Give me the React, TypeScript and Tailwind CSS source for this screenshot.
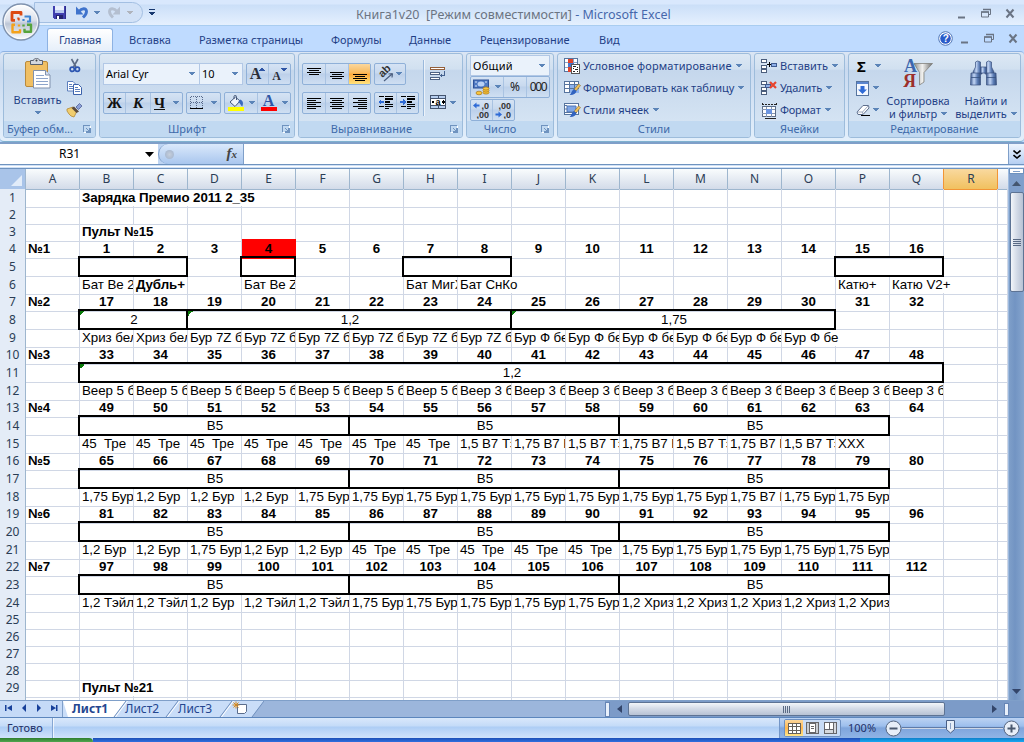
import React from "react";

type Kids = { children?: React.ReactNode };

/* ---------- small shared pieces ---------- */

function Caret({ c = "text-[#5b84b8]" }: { c?: string }) {
  return (
    <svg width="6" height="4" viewBox="0 0 6 4" className={`shrink-0 ${c}`} shapeRendering="crispEdges">
      <path d="M0 0h6v1H0zM1 1h4v1H1zM2 2h2v1H2z" fill="currentColor" />
    </svg>
  );
}

function Launcher() {
  return (
    <svg width="8" height="8" viewBox="0 0 8 8" shapeRendering="crispEdges" className="shrink-0">
      <path d="M0 0h7v1H1v6H0z" fill="#6f93bf" />
      <path d="M3 3h1v1h1v1h1V3h2v5H3V6h2V5H4V4H3z" fill="#6f93bf" />
      <path d="M1 7h2v1H1zM7 1h1v2H7z" fill="#fff" />
    </svg>
  );
}

function Group({ w, label, launcher, labelClass = "", children }: Kids & { w: string; label: string; launcher?: boolean; labelClass?: string }) {
  return (
    <section className={`flex h-[85px] shrink-0 flex-col overflow-hidden rounded-[3px] border border-[#9dbcdb] bg-[linear-gradient(#dce8f4,#d1e0f0_18%,#c5d7ec_20%,#d9e7f5)] ${w}`}>
      <div className="flex h-[67px] shrink-0">{children}</div>
      <div className={`flex h-4 shrink-0 items-center bg-[#c1d9f1] text-[#3e6aaa] ${launcher ? "pr-1" : ""}`}>
        <span className={`flex-1 whitespace-nowrap text-center leading-4 ${labelClass}`}>{label}</span>
        {launcher && <Launcher />}
      </div>
    </section>
  );
}

function Box({ w, children, className = "" }: Kids & { w: string; className?: string }) {
  return (
    <div className={`flex h-[22px] shrink-0 overflow-hidden rounded-[2px] border border-[#8fb0d8] bg-[linear-gradient(#d5e3f4,#c8d9ee_45%,#bcd0ea_50%,#cfdff2)] ${w} ${className}`}>
      {children}
    </div>
  );
}

function Cell({ w, children, last, className = "" }: Kids & { w: string; last?: boolean; className?: string }) {
  return (
    <button className={`flex h-full shrink-0 items-center justify-center ${last ? "" : "border-r border-[#a9c3e2]"} ${w} ${className}`}>
      {children}
    </button>
  );
}

/* ---------- icons ---------- */

function Lines({ rows, y = 1 }: { rows: [number, number][]; y?: number }) {
  return (
    <svg width="14" height="13" viewBox="0 0 14 13" shapeRendering="crispEdges">
      {rows.map(([x, w], i) => (
        <rect key={i} x={x} y={y + i * 2} width={w} height="1" fill="#000" />
      ))}
    </svg>
  );
}

function OfficeButton() {
  return (
    <svg width="38" height="38" viewBox="0 0 38 38">
      <defs>
        <linearGradient id="orb" x1="0" y1="0" x2="0" y2="1">
          <stop offset="0" stopColor="#fff" />
          <stop offset=".45" stopColor="#dde2ec" />
          <stop offset=".55" stopColor="#bcc6d6" />
          <stop offset="1" stopColor="#fff" />
        </linearGradient>
      </defs>
      <circle cx="19" cy="19" r="18" fill="url(#orb)" stroke="#7f92ae" strokeWidth="1.4" />
      <circle cx="19" cy="19" r="16.6" fill="none" stroke="#fff" strokeWidth="1" opacity=".8" />
      <g fill="none" strokeWidth="2.800" strokeLinejoin="round">
        <path d="M13 17.300h-3V9.500h9v3" stroke="#dc4a12" />
        <path d="M16.800 17.500v-2h-1.500" stroke="#dc4a12" strokeWidth="1.800" />
        <path d="M22.500 13.500h5.500v5h-3M21.500 16v2" stroke="#3f86d2" strokeWidth="2.200" />
        <path d="M13 21.800h-2.500v7.400h7.500v-3M17 21.500v2" stroke="#f4a21b" strokeWidth="2.400" />
        <path d="M25 21.800h4v7h-6.500v-3M21.500 21.500v2" stroke="#56a43c" strokeWidth="2.400" />
      </g>
    </svg>
  );
}

function Save() {
  return (
    <svg width="15" height="15" viewBox="0 0 15 15" shapeRendering="crispEdges">
      <path d="M1 1h13v13H2l-1-1z" fill="#3f3fae" />
      <path d="M3 1h9v7H3z" fill="#e8eefc" />
      <path d="M3 5h9v3H3z" fill="#b9c9f0" />
      <path d="M4 10h7v4H4z" fill="#23236e" />
      <path d="M5 11h2v3H5z" fill="#fff" />
      <path d="M13 1h1v13h-1z" fill="#2d2d8c" />
    </svg>
  );
}

function Undo({ c = "#3f73cc", flip }: { c?: string; flip?: boolean }) {
  return (
    <svg width="14" height="13" viewBox="0 0 14 13" className={flip ? "-scale-x-100" : ""}>
      <path d="M4 5.500C6.500 2 11.500 1.500 11.500 5.500c0 2.500-1.200 3.800-3.500 6" fill="none" stroke={c} strokeWidth="2.900" />
      <path d="M1 .5v8h7.500z" fill={c} />
    </svg>
  );
}

function Paste() {
  return (
    <svg width="28" height="32" viewBox="0 0 28 32">
      <rect x="1.500" y="3.500" width="22" height="25" rx="1.500" fill="#f0bf63" stroke="#b98a3c" />
      <path d="M6.500 2.500h3c.5-3 5.500-3 6 0h3v4h-12z" fill="#d4d8df" stroke="#59616f" />
      <circle cx="12.500" cy="2.500" r="1" fill="#444" />
      <path d="M9.500 12.500h12l4.500 4.500v13h-16.500z" fill="#fff" stroke="#8091ad" />
      <path d="M21.500 12.500v4.500h4.500" fill="#d7e1f1" stroke="#8091ad" />
      <path d="M12 17.500h8M12 20.500h12M12 23.500h12M12 26.500h12" stroke="#8ea5cb" />
    </svg>
  );
}

function Cut() {
  return (
    <svg width="12" height="15" viewBox="0 0 12 15">
      <path d="M2.500 1l4.500 8M9 1l-4.500 8" stroke="#5d6c86" strokeWidth="1.600" />
      <circle cx="3.200" cy="11.300" r="2.100" fill="none" stroke="#2c55b0" strokeWidth="1.700" />
      <circle cx="8.400" cy="11.300" r="2.100" fill="none" stroke="#2c55b0" strokeWidth="1.700" />
    </svg>
  );
}

function Copy() {
  return (
    <svg width="15" height="14" viewBox="0 0 15 14">
      <path d="M.5 .5h5.500l2.500 2.500v7h-8z" fill="#fff" stroke="#5c7fbe" />
      <path d="M2 3.500h3M2 5.500h5M2 7.500h5" stroke="#5c7fbe" />
      <path d="M6.500 3.500h5l3 3v7h-8z" fill="#fff" stroke="#3c62ab" />
      <path d="M8 6.500h3M8 8.500h5M8 10.500h5" stroke="#5c7fbe" />
    </svg>
  );
}

function Brush() {
  return (
    <svg width="17" height="15" viewBox="0 0 17 15">
      <path d="M1 6l6-2 4 4-3 6-3-1-2-2-2-3z" fill="#f0cd6e" stroke="#b48a35" strokeWidth=".8" />
      <path d="M8 3.500l5 5-2.500 1.500-5-5z" fill="#5b4a3c" />
      <path d="M10 4l3.500-3.500 2.500 2.500-3.500 3.500z" fill="#8ba0d8" stroke="#46558c" strokeWidth=".7" />
    </svg>
  );
}

function Borders() {
  return (
    <svg width="14" height="14" viewBox="0 0 14 14" shapeRendering="crispEdges">
      <path d="M.5 .5h12v12M.5 .5v12M6.500 .5v12M.5 6.500h12" fill="none" stroke="#57698a" strokeDasharray="1 1" />
      <path d="M0 12h13v1H0z" fill="#000" />
    </svg>
  );
}

function Bucket() {
  return (
    <svg width="16" height="16" viewBox="0 0 16 16">
      <path d="M7.500 2L2 7l5 4.500L12 6z" fill="#eef4fd" stroke="#46597a" />
      <path d="M6 4V1.500c0-1.500 2.500-1.500 2.500 0V5" fill="none" stroke="#46597a" />
      <path d="M12 4.500c3.500 1 3.500 4.500 2.200 7-1.700-1-1.700-3.500-4-4.500z" fill="#3a69bc" />
      <rect y="12" width="16" height="4" fill="#ff0" />
    </svg>
  );
}

function Orient() {
  return (
    <svg width="16" height="16" viewBox="0 0 16 16">
      <text x="0" y="0" transform="translate(4.500 12) rotate(-45)" fontFamily="Liberation Sans" fontWeight="700" fontSize="11" fill="#333">ab</text>
      <path d="M6 15l8-7M14.500 7.500l-4 .5M14.500 7.500l-.5 4" stroke="#4c5f80" fill="none" strokeWidth="1.200" />
    </svg>
  );
}

function Indent({ right }: { right?: boolean }) {
  return (
    <svg width="16" height="14" viewBox="0 0 16 14" shapeRendering="crispEdges">
      <path d="M1 0h5v1H1zM7 0h8v1H7zM7 2h8v2H7zM7 5h5v2H7zM7 8h8v1H7zM1 10h5v1H1zM7 10h8v1H7zM7 12h4v1H7z" fill="#000" />
      <path d={right ? "M0 5h3V3l3 3-3 3V7H0z" : "M6 5H3V3L0 6l3 3V7h3z"} fill="#2f6bd6" />
    </svg>
  );
}

function Wrap() {
  return (
    <svg width="17" height="15" viewBox="0 0 17 15" shapeRendering="crispEdges">
      <path d="M0 1h15v3H0z" fill="#94603c" />
      <path d="M1 2h13v1H1z" fill="#fff" />
      <path d="M0 6h10v3H0zM0 11h10v3H0z" fill="#4e6485" />
      <path d="M1 7h8v1H1zM1 12h8v1H1z" fill="#fff" />
      <path d="M14 5h1v5h-3v2l-2-2.500 2-2.500v2h2z" fill="#44618f" />
    </svg>
  );
}

function Merge() {
  return (
    <svg width="17" height="15" viewBox="0 0 17 15" shapeRendering="crispEdges">
      <rect x=".5" y=".5" width="15" height="13" fill="#b7cff0" stroke="#44546e" />
      <path d="M1 4h14v6H1z" fill="#fff" />
      <path d="M0 3.500h16M0 10.500h16M8 1v3M8 10v4" stroke="#44546e" />
      <path d="M1 7l2-2v1h1v2H3v1zM15 7l-2-2v1h-1v2h1v1z" fill="#000" />
      <text x="5.500" y="9.500" fontFamily="Liberation Sans" fontWeight="700" fontSize="9">a</text>
    </svg>
  );
}

function Money() {
  return (
    <svg width="18" height="17" viewBox="0 0 18 17">
      <rect x=".5" y="1" width="15" height="8" fill="#4d78c2" stroke="#2f5299" />
      <ellipse cx="8" cy="5" rx="3.500" ry="2.500" fill="#b8d0f5" />
      <path d="M2 3h2M12 3h2M2 7h2" stroke="#d8e5fb" />
      <g fill="#f8c53c" stroke="#a9751a" strokeWidth=".7">
        <ellipse cx="13" cy="13.500" rx="3" ry="1.600" />
        <ellipse cx="13" cy="11.500" rx="3" ry="1.600" />
        <ellipse cx="13" cy="9.500" rx="3" ry="1.600" />
        <ellipse cx="6" cy="14" rx="3" ry="1.800" />
      </g>
    </svg>
  );
}

function Decimals({ top, bottom, left }: { top: string; bottom: string; left?: boolean }) {
  return (
    <svg width="17" height="18" viewBox="0 0 17 18">
      <g fontFamily="Liberation Sans" fontSize="9" fontWeight="700" fill="#333">
        <text x="16" y="8" textAnchor="end">{top}</text>
        <text x="16" y="17" textAnchor="end">{bottom}</text>
      </g>
      <path d={left ? "M0 4.500l3.500-3v2h3v2h-3v2z" : "M7 13.500l-3.500-3v2H.5v2h3v2z"} fill="#2f6bd6" />
    </svg>
  );
}

function CondFormat() {
  return (
    <svg width="17" height="16" viewBox="0 0 17 16" shapeRendering="crispEdges">
      <rect x=".5" y=".5" width="13" height="13" fill="#fff" stroke="#56749f" />
      <path d="M1 4.500h12M1 9.500h12M4.500 1v12M9.500 1v12" stroke="#8aa3c7" />
      <path d="M4 1h5v4H4zM4 9h4v5H4z" fill="#e0432b" />
      <path d="M4 5h6v4H4z" fill="#4775cf" />
      <rect x="7.500" y="6.500" width="8" height="9" fill="#fff" stroke="#555" />
      <path d="M9 8h3M9 10h1M11 11h3M9 13h2M13 9v1M13 13v1" stroke="#222" />
    </svg>
  );
}

function TableFormat({ one }: { one?: boolean }) {
  return (
    <svg width="17" height="16" viewBox="0 0 17 16">
      <rect x=".5" y="1.500" width="14" height="11" fill="#fff" stroke="#56749f" />
      {one ? <path d="M3 4h9v6H3z" fill="#7fa6e6" stroke="#4f74b4" /> : <path d="M5 4h10v9H5z" fill="#8fb4ee" />}
      {one ? <path d="M1 3.500h2M1 7h2M1 10.500h12" stroke="#56749f" /> : <path d="M1 4.500h14M1 8.500h14M5.500 1v12M10.500 1v12" stroke="#56749f" />}
      <path d="M14.500 4l2 1.500-4.500 5.500-2-1.500z" fill="#f1c25a" stroke="#8a6a2a" strokeWidth=".6" />
      <path d="M10 9l2.500 2c-.5 3-4 4.500-7 4 2-1 2-4.500 4.500-6z" fill="#3163bf" />
    </svg>
  );
}

function CellsIcon({ kind }: { kind: "ins" | "del" | "fmt" }) {
  if (kind === "fmt")
    return (
      <svg width="17" height="17" viewBox="0 0 17 17" shapeRendering="crispEdges">
        <path d="M1 1v3M15 1v3M1 2.500h14" stroke="#222" strokeDasharray="2 1" fill="none" />
        <rect x="1.500" y="4.500" width="13" height="10" fill="#fff" stroke="#5b6d88" />
        <path d="M1 7.500h13M1 11.500h13M5.500 5v10M10.500 5v10" stroke="#8797af" />
        <path d="M5 7h6v5H5z" fill="#6d96e0" />
        <path d="M4 16h11" stroke="#222" />
      </svg>
    );
  return (
    <svg width="17" height="16" viewBox="0 0 17 16" shapeRendering="crispEdges">
      <g fill="#fff" stroke="#4b5e7c">
        <rect x=".5" y="1.500" width="5" height="3" />
        <rect x=".5" y="7.500" width="5" height="3" />
        <rect x=".5" y="11.500" width="5" height="3" />
      </g>
      {kind === "ins" ? (
        <>
          <path d="M6 6h4v1H6zM8 4h1v5H8z" fill="#000" />
          <rect x="10.500" y="5.500" width="5" height="3" fill="#8fb0e8" stroke="#3f5b8f" />
        </>
      ) : (
        <>
          <rect x="4.500" y="4.500" width="5" height="3" fill="#8fb0e8" stroke="#3f5b8f" />
          <path d="M9 2l6 6M15 2L9 8" stroke="#e8442c" strokeWidth="2.200" shapeRendering="auto" />
        </>
      )}
    </svg>
  );
}

function FillDown() {
  return (
    <svg width="13" height="15" viewBox="0 0 13 15">
      <rect x=".5" y=".5" width="12" height="14" fill="#f4f8ff" stroke="#56749f" />
      <path d="M1 1h11v2H1z" fill="#5b86cf" />
      <path d="M4.500 5h4v3.500h2.500L6.500 13 2 8.500h2.500z" fill="#2f6bd6" />
    </svg>
  );
}

function Eraser() {
  return (
    <svg width="15" height="13" viewBox="0 0 15 13">
      <path d="M1 8l6-6.500h5.500L13 4l-6 6.500H2z" fill="#fff" stroke="#5e6f8d" />
      <path d="M1 8h5.500l6-6.500M6.500 8l.5 2.500" fill="none" stroke="#8595b0" strokeWidth=".8" />
      <path d="M5 11.500h9" stroke="#000" />
    </svg>
  );
}

function SortFilter() {
  return (
    <svg width="31" height="30" viewBox="0 0 31 30">
      <defs>
        <linearGradient id="fun" x1="0" x2="1">
          <stop offset="0" stopColor="#8d8d8d" />
          <stop offset=".45" stopColor="#f2f2f0" />
          <stop offset="1" stopColor="#6f6f6f" />
        </linearGradient>
      </defs>
      <path d="M11 5.500h18.500l-8.500 9v9.500l-4.500 3V14.500z" fill="url(#fun)" stroke="#77756f" strokeWidth=".7" />
      <g fontFamily="Liberation Serif" fontWeight="700" fontSize="18">
        <text x="1" y="13.500" fill="#3c66ae">А</text>
        <text x="0" y="28.500" fill="#9c2f2b">Я</text>
      </g>
    </svg>
  );
}

function Binoculars() {
  return (
    <svg width="29" height="27" viewBox="0 0 29 27">
      <defs>
        <linearGradient id="bin" x1="0" x2="1">
          <stop offset="0" stopColor="#3f5c92" />
          <stop offset=".35" stopColor="#c3d6f5" />
          <stop offset=".7" stopColor="#5b7cb4" />
          <stop offset="1" stopColor="#35507f" />
        </linearGradient>
      </defs>
      <g fill="url(#bin)" stroke="#3b5280" strokeWidth=".7">
        <path d="M6.500 2l2-1 3 1v5l1.500 5v2H4v-2l2.500-5z" />
        <path d="M17.500 2l2-1 3 1v5L25 12v2h-9v-2l1.500-5z" />
        <rect x="11.500" y="7" width="6" height="6" />
        <path d="M2 13h9.500v12H1.500z" />
        <path d="M17.500 13H27l.5 12h-10z" />
      </g>
      <path d="M2 17.500h9.500M17.500 17.500H27" stroke="#35507f" strokeWidth=".8" />
    </svg>
  );
}

function WinButtons() {
  return (
    <svg width="60" height="12" viewBox="0 0 60 12">
      <path d="M2 9.500h7" stroke="#6a7484" strokeWidth="2" />
      <path d="M27.500 1.500h7v5h-2M25.500 4h7v5h-7z" fill="none" stroke="#6a7484" />
      <path d="M25 4h8M27 1.500h8" stroke="#6a7484" strokeWidth="1.500" />
      <path d="M50.500 1.500l7 8M57.500 1.500l-7 8" stroke="#6a7484" strokeWidth="2" />
    </svg>
  );
}

/* ---------- top of the window ---------- */

function TitleBar() {
  return (
    <header className="flex h-[26px] shrink-0 items-center border-b border-[#a9cdf0] bg-[linear-gradient(#d9e8fd_0,#d9e8fd_4px,#cbdff8_5px,#e5f0fe_25px)]">
      <div className="ml-[34px] flex h-[21px] w-[109px] items-center rounded-r-[11px] border border-[#a3bfe2] bg-[#d2e2f7] pl-[17px]">
        <Save />
        <span className="ml-[8px]"><Undo /></span>
        <span className="ml-[5px]"><Caret /></span>
        <span className="ml-[7px]"><Undo c="#b4bfd0" flip /></span>
        <span className="ml-[6px]"><Caret c="text-[#b0b4bc]" /></span>
      </div>
      <svg width="6" height="7" viewBox="0 0 6 7" className="ml-[6px]" shapeRendering="crispEdges">
        <path d="M0 0h6v1H0zM0 3h6v1H0zM1 4h4v1H1zM2 5h2v1H2z" fill="#17386f" />
      </svg>
      <h1 className="ml-[201px] mt-[4px] whitespace-pre text-[12.500px] leading-4 text-[#6b7482]">
        Книга1v20  [Режим совместимости] <span className="text-[#4667ab]">- Microsoft Excel</span>
      </h1>
      <div className="ml-auto mr-[8px] mt-[2px]"><WinButtons /></div>
    </header>
  );
}

const tabs: [string, string][] = [
  ["Вставка", "w-[70px]"],
  ["Разметка страницы", "w-[132px]"],
  ["Формулы", "w-[78px]"],
  ["Данные", "w-[71px]"],
  ["Рецензирование", "w-[119px]"],
  ["Вид", "w-[60px]"],
];

function RibbonTabs() {
  return (
    <nav className="flex h-[25px] shrink-0 items-end bg-[#bfdbff] text-[#1f3f86]">
      <button className="ml-[47px] h-[23px] w-[66px] rounded-t-[3px] border border-b-0 border-[#8db2e3] bg-[linear-gradient(#fff,#e6effa)] pl-[11px] text-left leading-[22px] tracking-[-0.150px]">
        Главная
      </button>
      <div className="ml-4 flex h-[23px]">
        {tabs.map(([t, w]) => (
          <button key={t} className={`whitespace-nowrap text-left leading-[24px] ${w}`}>{t}</button>
        ))}
      </div>
      <div className="mb-[5px] ml-auto mr-[5px] flex items-center">
        <svg width="15" height="15" viewBox="0 0 15 15" className="mr-[6px]">
          <circle cx="7.500" cy="7.500" r="6.800" fill="#fff" stroke="#4e74b6" />
          <circle cx="7.500" cy="7.500" r="5.300" fill="#2a5bc9" />
          <text x="4.700" y="11" fontFamily="Liberation Sans" fontWeight="700" fontSize="10" fill="#fff">?</text>
        </svg>
        <span className="flex"><WinButtons /></span>
      </div>
    </nav>
  );
}

function Item({ icon, label, cls = "" }: { icon: React.ReactNode; label: string; cls?: string }) {
  return (
    <button className="flex h-[22px] items-center whitespace-nowrap">
      <span className="flex w-[19px] shrink-0">{icon}</span>
      <span className={cls}>{label}</span>
      <span className="ml-1"><Caret /></span>
    </button>
  );
}

function Ribbon() {
  return (
    <div className="flex h-[91px] shrink-0 gap-[3px] rounded-[4px] border-y border-[#8db2e3] border-b-[#7fb1cf] bg-[linear-gradient(#dbe6f4,#c9daf0_20%,#e3effb)] pl-[3px] pt-px text-[#1f3f86]">
      <Group w="w-[93px]" label="Буфер обм..." launcher labelClass="pr-[7px]">
        <div className="flex w-[58px] flex-col items-center pl-[9px] pt-[4px]">
          <Paste />
          <span className="mt-px leading-[17px]">Вставить</span>
          <span className="mt-[3px] flex"><Caret /></span>
        </div>
        <div className="flex flex-col items-center gap-[8px] pl-[4px] pt-[4px]">
          <Cut />
          <Copy />
          <Brush />
        </div>
      </Group>

      <Group w="w-[196px]" label="Шрифт" launcher labelClass="pr-[8px]">
        <div className="flex flex-col gap-[7px] pl-[3px] pt-[9px]">
          <div className="flex">
            <div className="flex h-[22px] w-[97px] items-center justify-between border border-[#b2c8e6] bg-[#eaf2fb] pl-[2px] pr-[4px] text-black"><span className="tracking-[-0.100px]">Arial Cyr</span><Caret /></div>
            <div className="mr-[3px] flex h-[22px] w-[43px] items-center justify-between border border-l-0 border-[#b2c8e6] bg-[#eaf2fb] pl-[2px] pr-[4px] text-black"><span>10</span><Caret /></div>
            <Box w="w-[45px]" className="font-['Liberation_Serif',serif] font-bold text-[#2a2f3a]">
              <Cell w="w-[22px]"><span className="text-[16px]">A</span><span className="-ml-[2px] mb-[10px] flex rotate-180"><Caret c="text-[#2f56a5]" /></span></Cell>
              <Cell w="w-[21px]" last><span className="mt-[3px] text-[12px]">A</span><span className="mb-[9px] flex"><Caret c="text-[#2f56a5]" /></span></Cell>
            </Box>
          </div>
          <div className="flex gap-[3px]">
            <Box w="w-[80px]" className="font-['Liberation_Serif',serif] text-[15px] font-bold text-[#111]">
              <Cell w="w-[22px]">Ж</Cell>
              <Cell w="w-[25px]"><i>К</i></Cell>
              <Cell w="w-[31px]" last><span className="mr-[8px] underline">Ч</span><Caret /></Cell>
            </Box>
            <Box w="w-[35px]"><Cell w="w-[33px]" last><span className="mr-[7px]"><Borders /></span><Caret /></Cell></Box>
            <Box w="w-[67px]">
              <Cell w="w-[33px]"><span className="mr-[5px]"><Bucket /></span><Caret /></Cell>
              <Cell w="w-[32px]" last>
                <span className="mr-[5px] flex h-[16px] w-[16px] flex-col items-center border-b-4 border-[#f00] font-['Liberation_Serif',serif] text-[16px] font-bold leading-[12px] text-[#2f56a5]">A</span><Caret />
              </Cell>
            </Box>
          </div>
        </div>
      </Group>

      <Group w="w-[165px]" label="Выравнивание" launcher labelClass="pr-[6px] tracking-[0.100px]">
        <div className="flex flex-col gap-[7px] pl-[3px] pt-[9px]">
          <div className="flex gap-[3px]">
            <Box w="w-[69px]">
              <Cell w="w-[23px]"><Lines y={0} rows={[[0, 14], [2, 10], [0, 14], [2, 10]]} /></Cell>
              <Cell w="w-[23px]"><Lines y={4} rows={[[0, 14], [2, 10], [0, 14], [2, 10]]} /></Cell>
              <Cell w="w-[21px]" last className="bg-[linear-gradient(#fbd79c,#f9b95b_45%,#ffa93a_50%,#ffe27d)]"><Lines y={6} rows={[[0, 14], [2, 10], [0, 14], [2, 10]]} /></Cell>
            </Box>
            <Box w="w-[32px]"><Cell w="w-[30px]" last><span className="mr-[2px]"><Orient /></span><Caret /></Cell></Box>
          </div>
          <div className="flex gap-[3px]">
            <Box w="w-[69px]">
              <Cell w="w-[23px]"><Lines rows={[[0, 14], [0, 9], [0, 14], [0, 9], [0, 14], [0, 9]]} /></Cell>
              <Cell w="w-[23px]"><Lines rows={[[0, 14], [2, 10], [0, 14], [2, 10], [0, 14], [2, 10]]} /></Cell>
              <Cell w="w-[21px]" last><Lines rows={[[0, 14], [5, 9], [0, 14], [5, 9], [0, 14], [5, 9]]} /></Cell>
            </Box>
            <Box w="w-[45px]"><Cell w="w-[22px]"><Indent /></Cell><Cell w="w-[21px]" last><Indent right /></Cell></Box>
          </div>
        </div>
        <div className="ml-[4px] mt-[6px] h-[56px] w-[2px] border-l border-[#9ab9dc] bg-white/60" />
        <div className="ml-[5px] flex flex-col gap-[14px] pt-[12px]">
          <Wrap />
          <div className="flex items-center gap-[3px]"><Merge /><Caret /></div>
        </div>
      </Group>

      <Group w="w-[88px]" label="Число" launcher labelClass="pr-[8px]">
        <div className="flex flex-col pl-[3px] pt-px">
          <div className="flex h-[22px] w-[80px] items-center justify-between border border-[#b2c8e6] bg-[#eaf2fb] pl-[2px] pr-[4px] tracking-[0.300px] text-black"><span>Общий</span><Caret /></div>
          <Box w="w-[80px]">
            <Cell w="w-[33px]"><span className="mr-[4px]"><Money /></span><Caret /></Cell>
            <Cell w="w-[23px]"><span className="text-[12px] text-[#222]">%</span></Cell>
            <Cell w="w-[22px]" last><span className="text-[12px] tracking-[-1.400px] text-[#222]">000</span></Cell>
          </Box>
          <Box w="w-[45px]" className="mt-px">
            <Cell w="w-[22px]"><Decimals left top=",0" bottom=",00" /></Cell>
            <Cell w="w-[21px]" last><Decimals top=",00" bottom=",0" /></Cell>
          </Box>
        </div>
      </Group>

      <Group w="w-[194px]" label="Стили">
        <div className="flex flex-col pl-[6px] pt-px">
          <Item icon={<CondFormat />} label="Условное форматирование" cls="tracking-[0.120px]" />
          <Item icon={<TableFormat />} label="Форматировать как таблицу" cls="tracking-[-0.020px]" />
          <Item icon={<TableFormat one />} label="Стили ячеек" />
        </div>
      </Group>

      <Group w="w-[91px]" label="Ячейки">
        <div className="flex flex-col pl-[6px] pt-px">
          <Item icon={<CellsIcon kind="ins" />} label="Вставить" />
          <Item icon={<CellsIcon kind="del" />} label="Удалить" cls="tracking-[-0.100px]" />
          <Item icon={<CellsIcon kind="fmt" />} label="Формат" cls="tracking-[-0.200px]" />
        </div>
      </Group>

      <Group w="w-[173px]" label="Редактирование">
        <div className="flex w-[33px] flex-col pl-[7px] pt-px">
          <div className="flex h-[22px] items-center gap-[7px] pl-px"><span className="w-[11px] text-[15px] font-bold text-black">Σ</span><Caret /></div>
          <div className="flex h-[22px] items-center gap-[4px]"><FillDown /><Caret /></div>
          <div className="flex h-[22px] items-center gap-[2px]"><Eraser /><Caret /></div>
        </div>
        <div className="flex w-[72px] flex-col items-center pt-[4px] leading-[13px]">
          <div className="flex h-[30px] items-center"><SortFilter /></div>
          <span className="mt-[6px]">Сортировка</span>
          <span className="flex items-center gap-1">и фильтр<Caret /></span>
        </div>
        <div className="flex w-[64px] flex-col items-center pt-[4px] leading-[13px]">
          <div className="flex h-[30px] items-center pr-[5px]"><Binoculars /></div>
          <span className="mt-[6px]">Найти и</span>
          <span className="flex items-center gap-[4px]">выделить<Caret /></span>
        </div>
      </Group>
    </div>
  );
}

function FormulaBar() {
  return (
    <div className="flex h-[26px] shrink-0 flex-col bg-[#cfe1f7]">
      <div className="flex h-[23px] border-y border-b border-t-2 border-[#7f9fc9] border-b-[#6f93bf] bg-[#bfd5f3]">
        <div className="flex w-[158px] items-center justify-between bg-white pl-[59px] pr-[4px] text-[12px] text-black">
          <span>R31</span>
          <svg width="9" height="5" viewBox="0 0 9 5"><path d="M0 0h9L4.500 5z" /></svg>
        </div>
        <div className="flex w-[86px] items-center justify-between rounded-l-[11px] border border-y-0 border-[#7f9fc9] bg-[linear-gradient(#dbe9fb,#a9c6ee)] pl-[6px] pr-[6px]">
          <span className="h-[9px] w-[9px] rounded-full bg-[radial-gradient(#c6cfdc,#9fb1cb)]" />
          <span className="font-['Liberation_Serif',serif] text-[15px] font-bold italic leading-[15px] text-[#444]">f<span className="text-[11px]">x</span></span>
        </div>
        <div className="flex-1 bg-white" />
        <div className="flex w-[16px] items-center justify-center border-l border-[#7f9fc9] bg-[linear-gradient(#eef5fe,#b5cff2)]">
          <svg width="8" height="9" viewBox="0 0 8 9"><path d="M.5 .5L4 3.500 7.500 .5M.5 5L4 8l3.500-3" fill="none" stroke="#000" strokeWidth="1.600" /></svg>
        </div>
      </div>
      <div className="mt-px h-px bg-white" />
    </div>
  );
}

/* ---------- sheet ---------- */

type C = { t?: string; span?: number; kind?: "n" | "b" | "box" | "red" | "l"; flag?: boolean };

const rep = (t: string, n: number): C[] => Array.from({ length: n }, () => ({ t, kind: "l" as const }));
const gap = (n: number): C[] => Array.from({ length: n }, () => ({}));
const nums = (from: number): C[] =>
  Array.from({ length: 16 }, (_, i) => ({ t: String(from + i), kind: from + i === 4 ? ("red" as const) : ("n" as const) }));
const box = (span: number, t = "", flag = false): C => ({ t, span, kind: "box", flag });
const lbl = (t: string, span = 1): C => ({ t, span, kind: "b" });
const b5 = (): C[] => [{}, box(5, "В5"), box(5, "В5"), box(5, "В5"), ...gap(3)];

const sheet: C[][] = [
  [{}, lbl("Зарядка Премио 2011 2_35", 4), ...gap(14)],
  gap(19),
  [{}, lbl("Пульт №15", 2), ...gap(16)],
  [lbl("№1"), ...nums(1), ...gap(2)],
  [{}, box(2), {}, box(1), ...gap(2), box(2), ...gap(6), box(2), ...gap(2)],
  [{}, ...rep("Бат Ве 2", 1), lbl("Дубль+"), {}, ...rep("Бат Ве Z", 1), ...gap(2), ...rep("Бат МигХ", 1), { t: "Бат СнКо", kind: "l", span: 2 }, ...gap(5), ...rep("Катю+", 1), { t: "Катю V2+", kind: "l", span: 2 }, {}],
  [lbl("№2"), ...nums(17), ...gap(2)],
  [{}, box(2, "2", true), box(6, "1,2", true), box(6, "1,75", true), ...gap(4)],
  [{}, ...rep("Хриз бел", 2), ...rep("Бур 7Z б", 6), ...rep("Бур Ф бе", 5), { t: "Бур Ф бе", kind: "l", span: 2 }, ...gap(3)],
  [lbl("№3"), ...nums(33), ...gap(2)],
  [{}, box(16, "1,2", true), ...gap(2)],
  [{}, ...rep("Веер 5 б", 7), ...rep("Веер 3 б", 9), ...gap(2)],
  [lbl("№4"), ...nums(49), ...gap(2)],
  b5(),
  [{}, ...rep("45  Тре", 7), ...rep("1,5 В7 Тэ", 1), ...rep("1,75 В7 Б", 1), ...rep("1,5 В7 Тэ", 1), ...rep("1,75 В7 Б", 1), ...rep("1,5 В7 Тэ", 1), ...rep("1,75 В7 Б", 1), ...rep("1,5 В7 Тэ", 1), ...rep("XXX", 1), ...gap(3)],
  [lbl("№5"), ...nums(65), ...gap(2)],
  b5(),
  [{}, ...rep("1,75 Бур", 1), ...rep("1,2 Бур", 3), ...rep("1,75 Бур", 8), ...rep("1,75 В7 Б", 1), ...rep("1,75 Бур", 2), ...gap(3)],
  [lbl("№6"), ...nums(81), ...gap(2)],
  b5(),
  [{}, ...rep("1,2 Бур", 2), ...rep("1,75 Бур", 1), ...rep("1,2 Бур", 2), ...rep("45  Тре", 5), ...rep("1,75 Бур", 5), ...gap(3)],
  [lbl("№7"), ...nums(97), ...gap(2)],
  b5(),
  [{}, ...rep("1,2 Тэйл", 2), ...rep("1,2 Бур", 1), ...rep("1,2 Тэйл", 2), ...rep("1,75 Бур", 5), ...rep("1,2 Хриз", 5), ...gap(3)],
  gap(19),
  gap(19),
  gap(19),
  gap(19),
  [{}, lbl("Пульт №21", 2), ...gap(16)],
];

const tall = (n: number) => n >= 4 && n <= 23 && n % 3 !== 0;
const cols = "ABCDEFGHIJKLMNOPQR".split("");
const spans: Record<number, string> = {
  1: "col-span-1", 2: "col-span-2", 4: "col-span-4", 5: "col-span-5", 6: "col-span-6", 16: "col-span-16",
};
const grid = "grid grid-cols-[26px_repeat(18,54px)_10px]";

function SheetCell({ c }: { c: C }) {
  const base = `relative min-w-0 border-b border-r border-[#d0d7e5] text-[13.330px] leading-[17px] whitespace-pre ${spans[c.span ?? 1]}`;
  if (!c.kind) return <div className={base} />;
  if (c.kind === "box")
    return (
      <div className={`${base} pl-px text-center`}>
        {c.t}
        <div className="absolute -left-[2px] -top-[2px] -bottom-px -right-px z-10 border-2 border-black">
          {c.flag && <div className="h-[5px] w-[5px] bg-[linear-gradient(135deg,#0a7a0a_50%,transparent_50%)]" />}
        </div>
      </div>
    );
  if (c.kind === "red") return <div className={`${base} -mt-px border-[#f00] border-t bg-[#f00] text-center font-bold`}>{c.t}</div>;
  if (c.kind === "n") return <div className={`${base} text-center font-bold`}>{c.t}</div>;
  return <div className={`${base} overflow-hidden pl-[2px] ${c.kind === "b" ? "font-bold tracking-[-0.100px]" : "tracking-[-0.050px]"}`}>{c.t}</div>;
}

function Sheet() {
  return (
    <div className="h-[532px] w-[1008px] shrink-0 overflow-hidden bg-white font-['Liberation_Sans',Arial,sans-serif] text-black">
      <div className={`${grid} h-[21px] border-t border-[#6f93bf] font-['Noto_Sans',sans-serif] text-[12px] leading-[20px] text-[#2b3d55]`}>
        <div className="flex items-end justify-end border-b border-r border-[#9eb6ce] bg-[#a9c4e9] p-[3px]">
          <svg width="11" height="11" viewBox="0 0 11 11"><path d="M11 0v11H0z" fill="#e2ecf9" /></svg>
        </div>
        {cols.map((c) => (
          <div key={c} className={c === "R" ? "-ml-px border border-t-0 border-[#f29536] bg-[linear-gradient(#f9d99f,#f1c15f)] pl-px text-center" : "border-b border-r border-[#9eb6ce] bg-[linear-gradient(#f9fcfd,#d3dbe9)] text-center"}>{c}</div>
        ))}
        <div className="border-b border-[#9eb6ce] bg-[linear-gradient(#f9fcfd,#d3dbe9)]" />
      </div>
      {sheet.map((row, i) => (
        <div key={i} className={`${grid} ${tall(i + 1) ? "h-[18px]" : "h-[17px]"}`}>
          <div className="border-b border-r border-[#9eb6ce] bg-[#e4ecf7] text-center font-['Noto_Sans',sans-serif] text-[12px] leading-[18px] text-[#2b3d55]">{i + 1}</div>
          {row.map((c, j) => <SheetCell key={j} c={c} />)}
        </div>
      ))}
      <div className={`${grid} h-[18px]`}>
        <div className="border-r border-[#9eb6ce] bg-[#e4ecf7]" />
        {[lbl("№1"), ...nums(1).map((c) => ({ ...c, kind: "n" as const })), ...gap(2)].map((c, j) => <SheetCell key={j} c={c} />)}
      </div>
    </div>
  );
}

function VScroll() {
  return (
    <div className="flex h-[532px] w-[16px] flex-col items-center border-l border-[#9ebbe0] bg-[linear-gradient(90deg,#7f9fc9,#7294c3_40%,#86a5ce)]">
      <div className="flex h-[6px] w-full items-center border border-[#6f93bf] bg-white px-[3px]"><span className="h-px w-full bg-[#7f9fc9]" /></div>
      <div className="flex h-[18px] w-full items-center justify-center bg-[#7f9fcb]">
        <svg width="9" height="5" viewBox="0 0 9 5"><path d="M0 5h9L4.500 0z" fill="#44566f" /></svg>
      </div>
      <div className="flex h-[100px] w-[14px] flex-col items-center justify-center gap-px rounded-[2px] border border-[#5d7394] bg-[linear-gradient(90deg,#f3f6fa,#d5dce8_45%,#b7c2d4)]">
        {[0, 1, 2, 3].map((k) => <span key={k} className="h-px w-[8px] bg-[#5a6a84]" />)}
      </div>
      <div className="mb-[6px] mt-auto">
        <svg width="9" height="5" viewBox="0 0 9 5"><path d="M0 0h9L4.500 5z" fill="#33456a" /></svg>
      </div>
    </div>
  );
}

function NavArrow({ d }: { d: string }) {
  return <svg width="8" height="8" viewBox="0 0 8 8"><path d={d} fill="#17409a" /></svg>;
}

function SheetTabs() {
  return (
    <div className="flex h-[17px] shrink-0 border-t border-[#7f9fc9] bg-[#9cb6dc] text-[12px] text-[#24468f]">
      <div className="flex w-[63px] items-center gap-[7px] border-r border-[#7f9fc9] bg-[#c5daf7] pb-[2px] pl-[5px]">
        <NavArrow d="M0 1h1.500v6H0zM7 1v6L2 4z" />
        <NavArrow d="M6 0v8L2 4z" />
        <NavArrow d="M2 0v8l4-4z" />
        <NavArrow d="M1 1v6l5-3zM6 1h1.500v6H6z" />
      </div>
      <div className="relative h-[16px] w-[201px]">
        <svg width="201" height="16" viewBox="0 0 201 16" className="absolute inset-0">
          <path d="M0 0H201L189 16H0z" fill="#c9ddf8" />
          <path d="M0 0H63L51 16H5z" fill="#fff" />
          <path d="M63 0L51 16M115 0L103 16M169 0L157 16M201 0L189 16" stroke="#6f8fbd" fill="none" />
          <path d="M64.500 0L52.500 16M116.500 0L104.500 16M170.500 0L158.500 16" stroke="#fff" fill="none" />
          <path d="M174.500 3.500h9v7l-2 2h-7z" fill="#fff" stroke="#5a6d8d" />
          <path d="M173 .5v7M169.500 4h7M170.500 1.500l5 5M175.500 1.500l-5 5" stroke="#d98a1c" />
        </svg>
        <div className="relative flex leading-[15px]">
          <span className="w-[54px] pl-[9px] font-bold">Лист1</span>
          <span className="w-[53px] pl-[8px]">Лист2</span>
          <span className="pl-[8px]">Лист3</span>
        </div>
      </div>
      <div className="ml-auto flex w-[419px] items-center bg-[#7c9bc8]">
        <div className="h-[15px] w-[5px] border border-[#6685b5] bg-[#e8f0fb]" />
        <svg width="5" height="8" viewBox="0 0 5 8" className="ml-[7px]"><path d="M5 0v8L0 4z" fill="#33456a" /></svg>
        <div className="ml-[6px] flex h-[14px] w-[317px] items-center justify-center gap-px rounded-[2px] border border-[#5d7394] bg-[linear-gradient(#f3f6fa,#d5dce8_45%,#b7c2d4)]">
          {[0, 1, 2, 3].map((k) => <span key={k} className="h-[7px] w-px bg-[#5a6a84]" />)}
        </div>
        <svg width="5" height="8" viewBox="0 0 5 8" className="ml-[47px]"><path d="M0 0v8l5-4z" fill="#33456a" /></svg>
        <div className="ml-[7px] h-[13px] w-[5px] border border-[#6685b5] bg-[#e8f0fb]" />
      </div>
    </div>
  );
}

function Zoom({ plus }: { plus?: boolean }) {
  return (
    <svg width="17" height="17" viewBox="0 0 17 17" className="shrink-0">
      <circle cx="8.500" cy="8.500" r="7.500" fill="#e7eef8" stroke="#54647e" />
      <path d={plus ? "M4.500 8.500h8M8.500 4.500v8" : "M4.500 8.500h8"} stroke="#4a586e" strokeWidth="2" />
    </svg>
  );
}

function StatusBar() {
  return (
    <footer className="flex h-[21px] shrink-0 items-center border-t border-[#5c86bd] bg-[linear-gradient(#d9e8fb,#c4dbf8_40%,#adcdf5_45%,#cfe2fb)] text-[#1f3168]">
      <span className="w-[52px] pl-[7px]">Готово</span>
      <div className="h-full w-[2px] border-l border-[#86a7d3] bg-white/70" />
      <div className="ml-auto flex h-full w-[245px] items-center border-l border-[#7396c8] bg-[linear-gradient(#bcd3f3,#9dbfed_40%,#7fa5dc_50%,#8fb4e6)] pl-[4px]">
        <div className="flex h-[18px] w-[57px] overflow-hidden rounded-[2px] border border-[#6c8fc2] bg-[#c9dcf6]">
          <div className="flex w-[18px] items-center justify-center bg-[linear-gradient(#fbd79c,#ffb64d_50%,#ffe58a)]">
            <svg width="13" height="11" viewBox="0 0 13 11" shapeRendering="crispEdges"><path d="M0 0h13v11H0z" fill="#66615a" /><path d="M1 1h3v2H1zM5 1h3v2H5zM9 1h3v2H9zM1 4h3v3H1zM5 4h3v3H5zM9 4h3v3H9zM1 8h3v2H1zM5 8h3v2H5zM9 8h3v2H9z" fill="#fff" /></svg>
          </div>
          <div className="flex w-[18px] items-center justify-center">
            <svg width="13" height="12" viewBox="0 0 13 12" shapeRendering="crispEdges"><path d="M0 0h13v12H0z" fill="#66666a" /><path d="M1 1h11v10H1z" fill="#c8ccd2" /><path d="M3 1h7v10H3z" fill="#66666a" /><path d="M4 2h5v8H4z" fill="#fff" /><path d="M5 4h3v1H5zM5 6h3v1H5z" fill="#66666a" /></svg>
          </div>
          <div className="flex w-[19px] items-center justify-center">
            <svg width="13" height="12" viewBox="0 0 13 12" shapeRendering="crispEdges"><path d="M0 0h13v12H0z" fill="#66666a" /><path d="M1 1h4v6H1zM6 1h3v6H6z" fill="#fff" /><path d="M10 1h2v10H10zM1 8h8v3H1z" fill="#d5d8de" /></svg>
          </div>
        </div>
        <span className="ml-[7px] w-[37px]">100%</span>
        <Zoom />
        <div className="relative flex h-full w-[101px] items-center">
          <div className="h-[2px] w-full border-b border-white/70 bg-[#5f7ba8]" />
          <svg width="9" height="14" viewBox="0 0 9 14" className="absolute left-[44px] top-[2px]"><path d="M.5 .5h8v9l-4 3.500-4-3.500z" fill="#e7eef8" stroke="#4a5f86" /><path d="M4.500 3v6" stroke="#8aa0c4" /></svg>
        </div>
        <Zoom plus />
      </div>
    </footer>
  );
}

export default function App() {
  return (
    <div className="relative flex h-[742px] w-[1024px] flex-col overflow-hidden bg-[#bfdbff] font-['Noto_Sans',Tahoma,sans-serif] text-[11px] leading-[14px]">
      <TitleBar />
      <RibbonTabs />
      <Ribbon />
      <FormulaBar />
      <div className="flex shrink-0">
        <Sheet />
        <VScroll />
      </div>
      <SheetTabs />
      <StatusBar />
      <div className="flex h-[4px] shrink-0">
        <div className="w-[93px] rounded-tr-[4px] bg-[linear-gradient(#2f7d2f,#4fa64f)]" />
        <div className="flex-1 bg-[linear-gradient(#1c4fb5,#2f6fe0)]" />
        <div className="w-[164px] bg-[linear-gradient(#0f7fc8,#17a8f2)]" />
      </div>
      <div className="absolute left-[2px] top-[3px]"><OfficeButton /></div>
    </div>
  );
}
